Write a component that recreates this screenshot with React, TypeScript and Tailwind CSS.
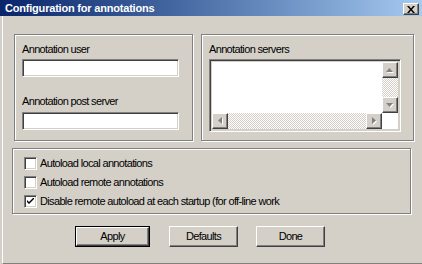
import React from "react";

const raised =
  "border border-t-white border-l-white border-b-[#404040] border-r-[#404040] shadow-[inset_-1px_-1px_0_#808080] bg-[#d4d0c8]";
const sunken =
  "border border-t-[#808080] border-l-[#808080] border-b-white border-r-white shadow-[inset_1px_1px_0_#404040,inset_-1px_-1px_0_#d4d0c8]";
const etched = "border border-[#808080] shadow-[inset_1px_1px_0_#fff,1px_1px_0_#fff]";
const dither =
  "bg-[repeating-conic-gradient(#d4d0c8_0_25%,#ffffff_0_50%)] bg-[length:2px_2px]";

function Arrow({ dir }: { dir: "up" | "down" | "left" | "right" }) {
  const pts: Record<string, string> = {
    up: "3.5,0 7,4 0,4",
    down: "0,0 7,0 3.5,4",
    left: "4,0 4,7 0,3.5",
    right: "0,0 4,3.5 0,7",
  };
  const vertical = dir === "up" || dir === "down";
  const w = vertical ? 7 : 4;
  const h = vertical ? 4 : 7;
  return (
    <svg width={w + 1} height={h + 1} viewBox={`0 0 ${w + 1} ${h + 1}`}>
      <polygon points={pts[dir]} fill="#ffffff" transform="translate(1,1)" />
      <polygon points={pts[dir]} fill="#808080" />
    </svg>
  );
}

function ScrollBtn({ dir }: { dir: "up" | "down" | "left" | "right" }) {
  return (
    <div className={`${raised} w-[16px] h-[16px] flex items-center justify-center shrink-0`}>
      <Arrow dir={dir} />
    </div>
  );
}

function Checkbox({ checked, label }: { checked?: boolean; label: string }) {
  return (
    <div className="h-[19px] flex items-center">
      <div className={`${sunken} w-[13px] h-[13px] bg-white flex items-center justify-center shrink-0`}>
        {checked && (
          <svg width="7" height="7" viewBox="0 0 7 7">
            <path d="M0 2 L0 4 L2 6 L7 1 L7 -1 L2 4 Z" fill="#000" />
          </svg>
        )}
      </div>
      <span className="ml-[3px] leading-[13px]">{label}</span>
    </div>
  );
}

function Button({ label, isDefault }: { label: string; isDefault?: boolean }) {
  const inner = (
    <div className={`${raised} w-full h-full flex items-center justify-center`}>
      <span className="leading-[13px]">{label}</span>
    </div>
  );
  if (isDefault) {
    return <div className="w-[75px] h-[21px] border border-black">{inner}</div>;
  }
  return <div className="w-[69px] h-[21px]">{inner}</div>;
}

export default function App() {
  return (
    <div
      className="w-[422px] h-[264px] bg-[#d4d0c8] flex flex-col overflow-hidden text-black text-[11px] tracking-[-0.65px] font-['Liberation_Sans',Arial,sans-serif]"
    >
      {/* Title bar */}
      <div className="h-[16px] shrink-0 flex bg-linear-to-r from-[#0a246a] to-[#a6caf0]">
        <span className="pl-[5px] text-white font-bold leading-[16px] tracking-[-0.2px]">
          Configuration for annotations
        </span>
        <div className="flex-1" />
        <div className={`${raised} w-[16px] h-[12px] mt-[3px] mr-[3px] flex items-center justify-center`}>
          <svg width="8" height="7" viewBox="0 0 8 7">
            <path d="M0 0 H2 L4 2.5 L6 0 H8 L5 3.5 L8 7 H6 L4 4.5 L2 7 H0 L3 3.5 Z" fill="#000" />
          </svg>
        </div>
      </div>

      {/* Body */}
      <div className="flex-1 ml-[2px] border-l border-white border-b border-b-[#808080] flex flex-col pt-[18px]">
        <div className="flex">
          {/* Group 1 */}
          <div className={`${etched} ml-[11px] w-[179px] h-[107px] flex flex-col pt-[8px] pl-[7px]`}>
            <span className="leading-[13px]">Annotation user</span>
            <div className={`${sunken} bg-white w-[157px] h-[18px] mt-[3px]`} />
            <span className="leading-[13px] mt-[18px]">Annotation post server</span>
            <div className={`${sunken} bg-white w-[157px] h-[18px] mt-[4px]`} />
          </div>
          {/* Group 2 */}
          <div className={`${etched} ml-[8px] w-[213px] h-[107px] flex flex-col pt-[8px] pl-[7px]`}>
            <span className="leading-[13px]">Annotation servers</span>
            <div className={`${sunken} w-[192px] h-[73px] mt-[3px] p-[2px] flex flex-col`}>
              <div className="flex flex-1">
                <div className="flex-1 bg-white" />
                <div className="w-[16px] flex flex-col">
                  <ScrollBtn dir="up" />
                  <div className={`flex-1 ${dither}`} />
                  <ScrollBtn dir="down" />
                </div>
              </div>
              <div className="flex h-[16px]">
                <ScrollBtn dir="left" />
                <div className={`flex-1 ${dither}`} />
                <ScrollBtn dir="right" />
                <div className="w-[16px] bg-white" />
              </div>
            </div>
          </div>
        </div>

        {/* Group 3 */}
        <div className={`${etched} ml-[9px] mt-[7px] w-[399px] h-[66px] flex flex-col pt-[5px] pl-[11px]`}>
          <Checkbox label="Autoload local annotations" />
          <Checkbox label="Autoload remote annotations" />
          <Checkbox checked label="Disable remote autoload at each startup (for off-line work" />
        </div>

        {/* Buttons */}
        <div className="flex mt-[12px] ml-[72px]">
          <Button label="Apply" isDefault />
          <div className="ml-[19px]">
            <Button label="Defaults" />
          </div>
          <div className="ml-[18px]">
            <Button label="Done" />
          </div>
        </div>
      </div>
    </div>
  );
}
